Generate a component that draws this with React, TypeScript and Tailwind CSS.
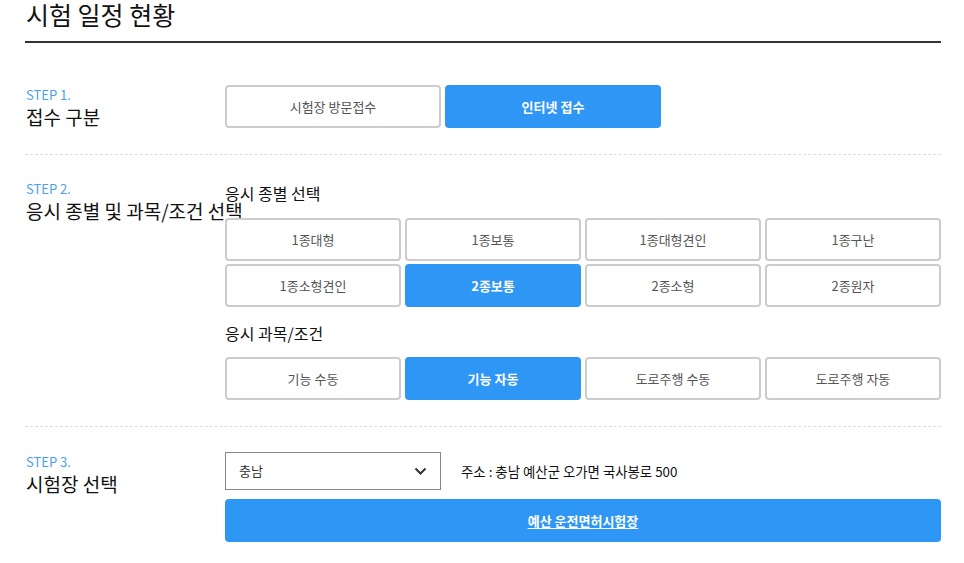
import React from "react";

const font = { fontFamily: '"Noto Sans CJK KR", "Noto Sans", sans-serif' };

function Btn({ label, active }: { label: string; active?: boolean }) {
  return (
    <div
      className={
        active
          ? "h-[43px] flex items-center justify-center rounded-[4px] border-2 border-[#2e96f5] bg-[#2e96f5] text-white font-bold text-[13px]"
          : "h-[43px] flex items-center justify-center rounded-[4px] border-2 border-[#cccccc] bg-white text-[#555555] text-[13px]"
      }
    >
      {label}
    </div>
  );
}

function StepLabel({ step, title }: { step: string; title: string }) {
  return (
    <div className="w-[200px] shrink-0 pl-[1px] -mt-[1px]">
      <div className="text-[13px] leading-[19px] text-[#4a9ff5]">{step}</div>
      <div className="text-[19px] leading-[28px] -mt-[1px] text-[#111111] whitespace-nowrap">{title}</div>
    </div>
  );
}

export default function App() {
  return (
    <div className="bg-white w-[964px] h-[563px] overflow-hidden" style={font}>
      <div className="ml-[25px] w-[916px]">
        <h1 className="text-[25px] leading-[28px] pb-[13px] pl-[1px] text-[#111111] border-b-2 border-[#333333] font-normal">
          시험 일정 현황
        </h1>

        {/* Step 1 */}
        <div className="flex pt-[42px] pb-[26px] border-b border-dashed border-[#dddddd]">
          <div className="pt-[1px] h-[43px]">
            <StepLabel step="STEP 1." title="접수 구분" />
          </div>
          <div className="flex-1 flex gap-[4px]">
            <div className="w-[216px]">
              <Btn label="시험장 방문접수" />
            </div>
            <div className="w-[216px]">
              <Btn label="인터넷 접수" active />
            </div>
          </div>
        </div>

        {/* Step 2 */}
        <div className="flex pt-[25px] pb-[26px] border-b border-dashed border-[#dddddd]">
          <StepLabel step="STEP 2." title="응시 종별 및 과목/조건 선택" />
          <div className="flex-1">
            <div className="text-[16px] leading-[24px] text-[#111111] mt-[1px] mb-[13px]">응시 종별 선택</div>
            <div className="grid grid-cols-4 gap-x-[4px] gap-y-[3px]">
              <Btn label="1종대형" />
              <Btn label="1종보통" />
              <Btn label="1종대형견인" />
              <Btn label="1종구난" />
              <Btn label="1종소형견인" />
              <Btn label="2종보통" active />
              <Btn label="2종소형" />
              <Btn label="2종원자" />
            </div>
            <div className="text-[16px] leading-[24px] text-[#111111] mt-[14px] mb-[12px]">응시 과목/조건</div>
            <div className="grid grid-cols-4 gap-x-[4px]">
              <Btn label="기능 수동" />
              <Btn label="기능 자동" active />
              <Btn label="도로주행 수동" />
              <Btn label="도로주행 자동" />
            </div>
          </div>
        </div>

        {/* Step 3 */}
        <div className="flex pt-[25px]">
          <div className="pt-[1px]">
            <StepLabel step="STEP 3." title="시험장 선택" />
          </div>
          <div className="flex-1">
            <div className="flex items-center">
              <div className="w-[216px] h-[38px] border border-[#888888] flex items-center justify-between pl-[13px] pr-[13px] text-[13px] text-[#333333]">
                <span>충남</span>
                <svg width="13" height="8" viewBox="0 0 13 8" fill="none">
                  <path d="M1.5 1.5 L6.5 6.5 L11.5 1.5" stroke="#333333" strokeWidth="2" />
                </svg>
              </div>
              <div className="ml-[20px] text-[13.4px] text-[#111111]">주소 : 충남 예산군 오가면 국사봉로 500</div>
            </div>
            <div className="mt-[9px] h-[43px] rounded-[4px] bg-[#2e96f5] flex items-center justify-center">
              <span className="text-white text-[13px] font-bold underline underline-offset-2">예산 운전면허시험장</span>
            </div>
          </div>
        </div>
      </div>
    </div>
  );
}
